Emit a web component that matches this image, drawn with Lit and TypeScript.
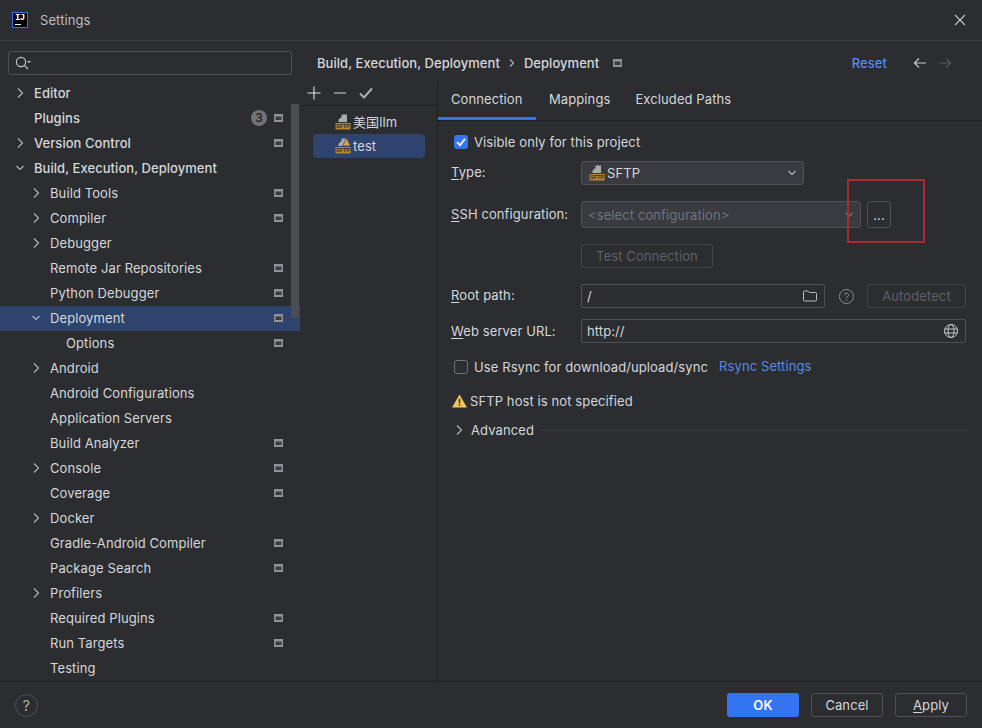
import { LitElement, html, css, svg } from 'lit';
import { customElement } from 'lit/decorators.js';

interface TreeItem {
  label: string;
  depth: number;
  arrow?: 'right' | 'down';
  pin?: boolean;
  badge?: string;
  selected?: boolean;
  strong?: boolean;
}

const TREE: TreeItem[] = [
  { label: 'Editor', depth: 0, arrow: 'right', strong: true },
  { label: 'Plugins', depth: 0, pin: true, badge: '3', strong: true },
  { label: 'Version Control', depth: 0, arrow: 'right', pin: true, strong: true },
  { label: 'Build, Execution, Deployment', depth: 0, arrow: 'down', strong: true },
  { label: 'Build Tools', depth: 1, arrow: 'right', pin: true },
  { label: 'Compiler', depth: 1, arrow: 'right', pin: true },
  { label: 'Debugger', depth: 1, arrow: 'right' },
  { label: 'Remote Jar Repositories', depth: 1, pin: true },
  { label: 'Python Debugger', depth: 1, pin: true },
  { label: 'Deployment', depth: 1, arrow: 'down', pin: true, selected: true },
  { label: 'Options', depth: 2, pin: true },
  { label: 'Android', depth: 1, arrow: 'right' },
  { label: 'Android Configurations', depth: 1 },
  { label: 'Application Servers', depth: 1 },
  { label: 'Build Analyzer', depth: 1, pin: true },
  { label: 'Console', depth: 1, arrow: 'right', pin: true },
  { label: 'Coverage', depth: 1, pin: true },
  { label: 'Docker', depth: 1, arrow: 'right' },
  { label: 'Gradle-Android Compiler', depth: 1, pin: true },
  { label: 'Package Search', depth: 1, pin: true },
  { label: 'Profilers', depth: 1, arrow: 'right' },
  { label: 'Required Plugins', depth: 1, pin: true },
  { label: 'Run Targets', depth: 1, pin: true },
  { label: 'Testing', depth: 1 },
];

const chevron = (dir: 'right' | 'down', color = '#b4b8bf') => html`
  <svg width="12" height="12" viewBox="0 0 12 12" fill="none" stroke=${color} stroke-width="1.1">
    <path d=${dir === 'right' ? 'M4 1.5 8.5 6 4 10.5' : 'M2.5 4 6 7.5 9.5 4'} />
  </svg>`;

const pinIcon = html`
  <svg class="pin" width="9" height="8" viewBox="0 0 9 8">
    <rect width="9" height="8" fill="#8f9298" />
    <rect x="1.5" y="2.5" width="6" height="3.5" fill="#3a3c40" />
  </svg>`;

const sftpIcon = (warn = false) => html`
  <svg class="sftp" width="16" height="16" viewBox="0 0 16 16">
    <path d="M3.5 8V5.5L6.5 3V.5H12V8z" fill="#a8abb0" />
    ${warn ? svg`<path d="M11.5 0 15.5 8h-8z" fill="#e0a53a" stroke="#2e436e" stroke-width=".7" />` : ''}
    <rect x="0.5" y="9" width="15" height="6.5" fill="#b5852f" />
    <text x="8" y="14.4" font-size="5.4" font-weight="700" text-anchor="middle" fill="#2b2d30" font-family="Liberation Sans, sans-serif" letter-spacing="0">SFTP</text>
  </svg>`;

@customElement('app-root')
export class AppRoot extends LitElement {
  static styles = css`
    :host {
      display: block;
      width: 982px;
      height: 728px;
      background: #2b2d30;
      color: #d5d7db;
      font-family: Inter, 'Noto Sans CJK SC', sans-serif;
      font-size: 13px;
      letter-spacing: 0.1px;
      position: relative;
      overflow: hidden;
    }
    u { text-underline-offset: 2px; }
    svg { display: block; flex: none; }

    .titlebar {
      height: 40px;
      border-bottom: 1px solid #3c3e43;
      display: flex;
      align-items: center;
      padding: 0 16px 0 12px;
    }
    .logo {
      width: 12px;
      height: 14px;
      background: #000;
      border: 1px solid #3574f0;
      color: #fff;
      font: 700 9px/10px 'Liberation Mono', monospace;
      letter-spacing: -0.6px;
      padding-left: 2px;
      margin-right: 12px;
      position: relative;
    }
    .logo::after {
      content: '';
      position: absolute;
      left: 2px;
      bottom: 2px;
      width: 6px;
      height: 1px;
      background: #fff;
    }
    .title { color: #b9bcc3; flex: 1; }

    .body {
      display: grid;
      grid-template-columns: 300px 1fr;
      height: 640px;
      border-bottom: 1px solid #1e1f22;
    }

    .sidebar { display: flex; flex-direction: column; overflow: hidden; }
    .search {
      margin: 10px 8px 6px;
      height: 24px;
      flex: none;
      border: 1px solid #4e5157;
      border-radius: 3px;
      box-sizing: border-box;
      display: flex;
      align-items: center;
      padding-left: 6px;
    }
    .row {
      height: 25px;
      flex: none;
      display: flex;
      align-items: center;
      white-space: nowrap;
      box-sizing: border-box;
      padding-bottom: 1px;
    }
    .row.selected { background: #2e436e; }
    .row.strong { font-weight: 500; letter-spacing: 0.05px; }
    .arrow { width: 12px; height: 12px; margin-right: 8px; }
    .label { flex: 1; }
    .badge {
      width: 16px;
      height: 16px;
      border-radius: 50%;
      background: #6f737a;
      color: #1e1f22;
      font-size: 12px;
      letter-spacing: 0;
      text-align: center;
      line-height: 16px;
      margin-right: 7px;
    }
    .pin { margin-right: 17px; }
    .thumb {
      position: absolute;
      left: 291px;
      top: 104px;
      width: 8px;
      height: 214px;
      background: #4b4d52;
    }

    .main { display: flex; flex-direction: column; min-width: 0; }
    .crumbs {
      height: 40px;
      flex: none;
      display: flex;
      align-items: center;
      padding: 3px 30px 0 17px;
      box-sizing: border-box;
      font-weight: 500;
      letter-spacing: 0.05px;
    }
    .crumbs .sep { margin: 0 8px; }
    .crumbs .pin { margin: 0 0 0 14px; }
    .spacer { flex: 1; }
    .reset { color: #548af7; margin-right: 26px; }
    .crumbs svg + svg { margin-left: 11px; }

    .panes {
      flex: 1;
      display: grid;
      grid-template-columns: 138px 1fr;
      min-height: 0;
    }
    .list { border-right: 1px solid #1e1f22; }
    .toolbar {
      height: 24px;
      border-bottom: 1px solid #1e1f22;
      display: flex;
      align-items: center;
      padding-left: 7px;
      gap: 12px;
    }
    .server {
      margin-left: 13px;
      width: 112px;
      height: 24px;
      display: flex;
      align-items: center;
      padding-left: 22px;
      box-sizing: border-box;
      gap: 2px;
      border-radius: 4px;
    }
    .server.first { margin-top: 3px; height: 25px; }
    .server.selected { background: #2e436e; }

    .tabs {
      height: 40px;
      border-bottom: 1px solid #1e1f22;
      display: flex;
      box-sizing: border-box;
    }
    .tab {
      padding: 0 13px;
      height: 39px;
      line-height: 37px;
      box-sizing: border-box;
      white-space: nowrap;
    }
    .tab.active { border-bottom: 3px solid #3574f0; width: 98px; }
    .tab + .tab + .tab { margin-left: -1px; }

    .form { padding: 9px 16px 0 13px; }
    .line {
      display: flex;
      align-items: center;
      white-space: nowrap;
    }
    .name { width: 130px; flex: none; }
    .name.up { padding-bottom: 2px; }
    .check {
      width: 14px;
      height: 14px;
      border-radius: 3px;
      box-sizing: border-box;
      margin: 0 6px 0 3px;
      flex: none;
      border: 1px solid #6f737a;
    }
    .check.on {
      background: #3574f0;
      border: none;
      display: flex;
      align-items: center;
      justify-content: center;
    }
    .control {
      height: 24px;
      box-sizing: border-box;
      border: 1px solid #4e5157;
      border-radius: 2px;
      display: flex;
      align-items: center;
      justify-content: space-between;
      padding: 0 7px 0 5px;
    }
    .combo { background: #393b40; border-radius: 3px; padding: 0 5px 0 7px; }
    .combo .val { display: flex; align-items: center; gap: 2px; }
    .muted { color: #6f737a; margin-left: -1px; }
    .btn {
      height: 24px;
      box-sizing: border-box;
      border: 1px solid #4e5157;
      border-radius: 3px;
      display: flex;
      align-items: center;
      justify-content: center;
    }
    .btn.off { color: #5f6168; border-color: #43454a; }
    .link { color: #5a8ae0; padding-bottom: 2px; }
    .warn { gap: 3px; }
    .warn svg { margin-left: 1px; }
    .adv .rule { flex: 1; height: 1px; background: #393b40; margin-left: 6px; }
    .adv .twist { width: 18px; flex: none; margin-left: 2px; }

    .footer {
      height: 46px;
      display: flex;
      align-items: center;
      padding: 0 15px;
      gap: 12px;
    }
    .help {
      width: 23px;
      height: 23px;
      border-radius: 50%;
      border: 1px solid #4e5157;
      box-sizing: border-box;
      text-align: center;
      line-height: 21px;
      font-size: 14px;
      color: #b4b8bf;
      margin-right: auto;
    }
    .footer .btn { width: 72px; }
    .footer .ok { background: #3574f0; border: none; color: #fff; font-weight: 600; }

    .mark {
      position: absolute;
      left: 847px;
      top: 179px;
      width: 78px;
      height: 64px;
      border: 2px solid #a92a30;
      box-sizing: border-box;
      pointer-events: none;
    }
  `;

  renderRow(item: TreeItem) {
    const left = 14 + item.depth * 16;
    return html`
      <div class="row ${item.selected ? 'selected' : ''} ${item.strong ? 'strong' : ''}" style="padding-left:${left}px">
        <span class="arrow">${item.arrow ? chevron(item.arrow) : ''}</span>
        <span class="label">${item.label}</span>
        ${item.badge ? html`<span class="badge">${item.badge}</span>` : ''}
        ${item.pin ? pinIcon : ''}
      </div>`;
  }

  render() {
    return html`
      <div class="titlebar">
        <div class="logo">IJ</div>
        <div class="title">Settings</div>
        <svg width="12" height="12" viewBox="0 0 12 12" stroke="#c4c7cc" stroke-width="1.1"><path d="M1 1l10 10M11 1 1 11" /></svg>
      </div>

      <div class="body">
        <div class="sidebar">
          <div class="search">
            <svg width="16" height="14" viewBox="0 0 16 14" fill="none" stroke="#c4c7cc" stroke-width="1.1">
              <circle cx="6" cy="6" r="4.6" /><path d="M9.4 9.4 13 13" /><path d="M12 5h4l-2 2z" fill="#c4c7cc" stroke="none" />
            </svg>
          </div>
          ${TREE.map((item) => this.renderRow(item))}
        </div>

        <div class="main">
          <div class="crumbs">
            <span>Build, Execution, Deployment</span>
            <span class="sep"><svg width="8" height="10" viewBox="0 0 8 10" fill="none" stroke="#b4b8bf" stroke-width="1.1"><path d="M2 1.5 5.5 5 2 8.5" /></svg></span>
            <span>Deployment</span>
            ${pinIcon}
            <span class="spacer"></span>
            <span class="reset">Reset</span>
            <svg width="14" height="12" viewBox="0 0 14 12" fill="none" stroke="#c4c7cc" stroke-width="1.2"><path d="M13 6H1.5M6 1.5 1.5 6 6 10.5" /></svg>
            <svg width="14" height="12" viewBox="0 0 14 12" fill="none" stroke="#55585e" stroke-width="1.2"><path d="M1 6h11.5M8 1.5 12.5 6 8 10.5" /></svg>
          </div>

          <div class="panes">
            <div class="list">
              <div class="toolbar">
                <svg width="14" height="14" viewBox="0 0 14 14" stroke="#dfe1e5" stroke-width="1.1"><path d="M7 .5v13M.5 7h13" /></svg>
                <svg width="14" height="14" viewBox="0 0 14 14" stroke="#c4c7cc" stroke-width="1.1"><path d="M1 7h12" /></svg>
                <svg width="14" height="14" viewBox="0 0 14 14" fill="none" stroke="#a8abb0" stroke-width="2.2"><path d="M1 7.5 5 11.5 13 2.5" /></svg>
              </div>
              <div class="server first">${sftpIcon()}<span>美国llm</span></div>
              <div class="server selected">${sftpIcon(true)}<span>test</span></div>
            </div>

            <div class="content">
              <div class="tabs">
                <div class="tab active">Connection</div>
                <div class="tab">Mappings</div>
                <div class="tab">Excluded Paths</div>
              </div>
              <div class="form">
                <div class="line" style="height:24px">
                  <span class="check on">
                    <svg width="10" height="10" viewBox="0 0 10 10" fill="none" stroke="#fff" stroke-width="1.8"><path d="M1 5.2 4 8.2 9 1.8" /></svg>
                  </span>
                  <span>Visible only for this project</span>
                </div>
                <div class="line" style="margin-top:7px">
                  <span class="name up"><u>T</u>ype:</span>
                  <div class="control combo" style="width:223px">
                    <span class="val">${sftpIcon()}<span>SFTP</span></span>
                    ${chevron('down')}
                  </div>
                </div>
                <div class="line" style="margin-top:16px">
                  <span class="name up"><u>S</u>SH configuration:</span>
                  <div class="control combo" style="width:280px;height:27px">
                    <span class="muted">&lt;select configuration&gt;</span>
                    ${chevron('down', '#7a7d84')}
                  </div>
                  <div class="btn" style="width:24px;height:27px;margin-left:6px">...</div>
                </div>
                <div class="line" style="margin-top:16px">
                  <span class="name"></span>
                  <div class="btn off" style="width:132px">Test Connection</div>
                </div>
                <div class="line" style="margin-top:16px">
                  <span class="name up"><u>R</u>oot path:</span>
                  <div class="control" style="width:244px">
                    <span>/</span>
                    <svg width="14" height="12" viewBox="0 0 14 12" fill="none" stroke="#b4b8bf"><path d="M.5 2a1 1 0 0 1 1-1h3.5l1.5 1.5h6a1 1 0 0 1 1 1v6.5a1 1 0 0 1-1 1h-11a1 1 0 0 1-1-1z" /></svg>
                  </div>
                  <svg style="margin-left:14px" width="15" height="15" viewBox="0 0 15 15" fill="none" stroke="#8b8e95"><circle cx="7.5" cy="7.5" r="7" /><path d="M5.5 6a2 2 0 1 1 3 1.7c-.7.4-1 .8-1 1.6M7.5 10.6v1.2" /></svg>
                  <div class="btn off" style="width:99px;margin-left:13px">Autodetect</div>
                </div>
                <div class="line" style="margin-top:11px">
                  <span class="name"><u>W</u>eb server URL:</span>
                  <div class="control" style="width:385px">
                    <span>http://</span>
                    <svg width="14" height="14" viewBox="0 0 14 14" fill="none" stroke="#c4c7cc"><circle cx="7" cy="7" r="6.5" /><ellipse cx="7" cy="7" rx="3" ry="6.5" /><path d="M.5 5h13M.5 9h13" /></svg>
                  </div>
                </div>
                <div class="line" style="margin-top:12px;height:24px">
                  <span class="check"></span>
                  <span>Use Rsync for download/upload/sync</span>
                  <span class="link" style="margin-left:11px">Rsync Settings</span>
                </div>
                <div class="line warn" style="margin-top:10px;height:24px">
                  <svg width="15" height="14" viewBox="0 0 16 14"><path d="M8 0 16 14H0z" fill="#f2c55c" /><path d="M7.2 4.5h1.6v5H7.2zM7.2 10.5h1.6V12H7.2z" fill="#2b2d30" /></svg>
                  <span>SFTP host is not specified</span>
                </div>
                <div class="line adv" style="margin-top:5px;height:24px;margin-right:-3px">
                  <span class="twist">${chevron('right')}</span>
                  <span>Advanced</span>
                  <span class="rule"></span>
                </div>
              </div>
            </div>
          </div>
        </div>
      </div>

      <div class="footer">
        <div class="help">?</div>
        <div class="btn ok">OK</div>
        <div class="btn">Cancel</div>
        <div class="btn"><span><u>A</u>pply</span></div>
      </div>

      <div class="thumb"></div>
      <div class="mark"></div>
    `;
  }
}
